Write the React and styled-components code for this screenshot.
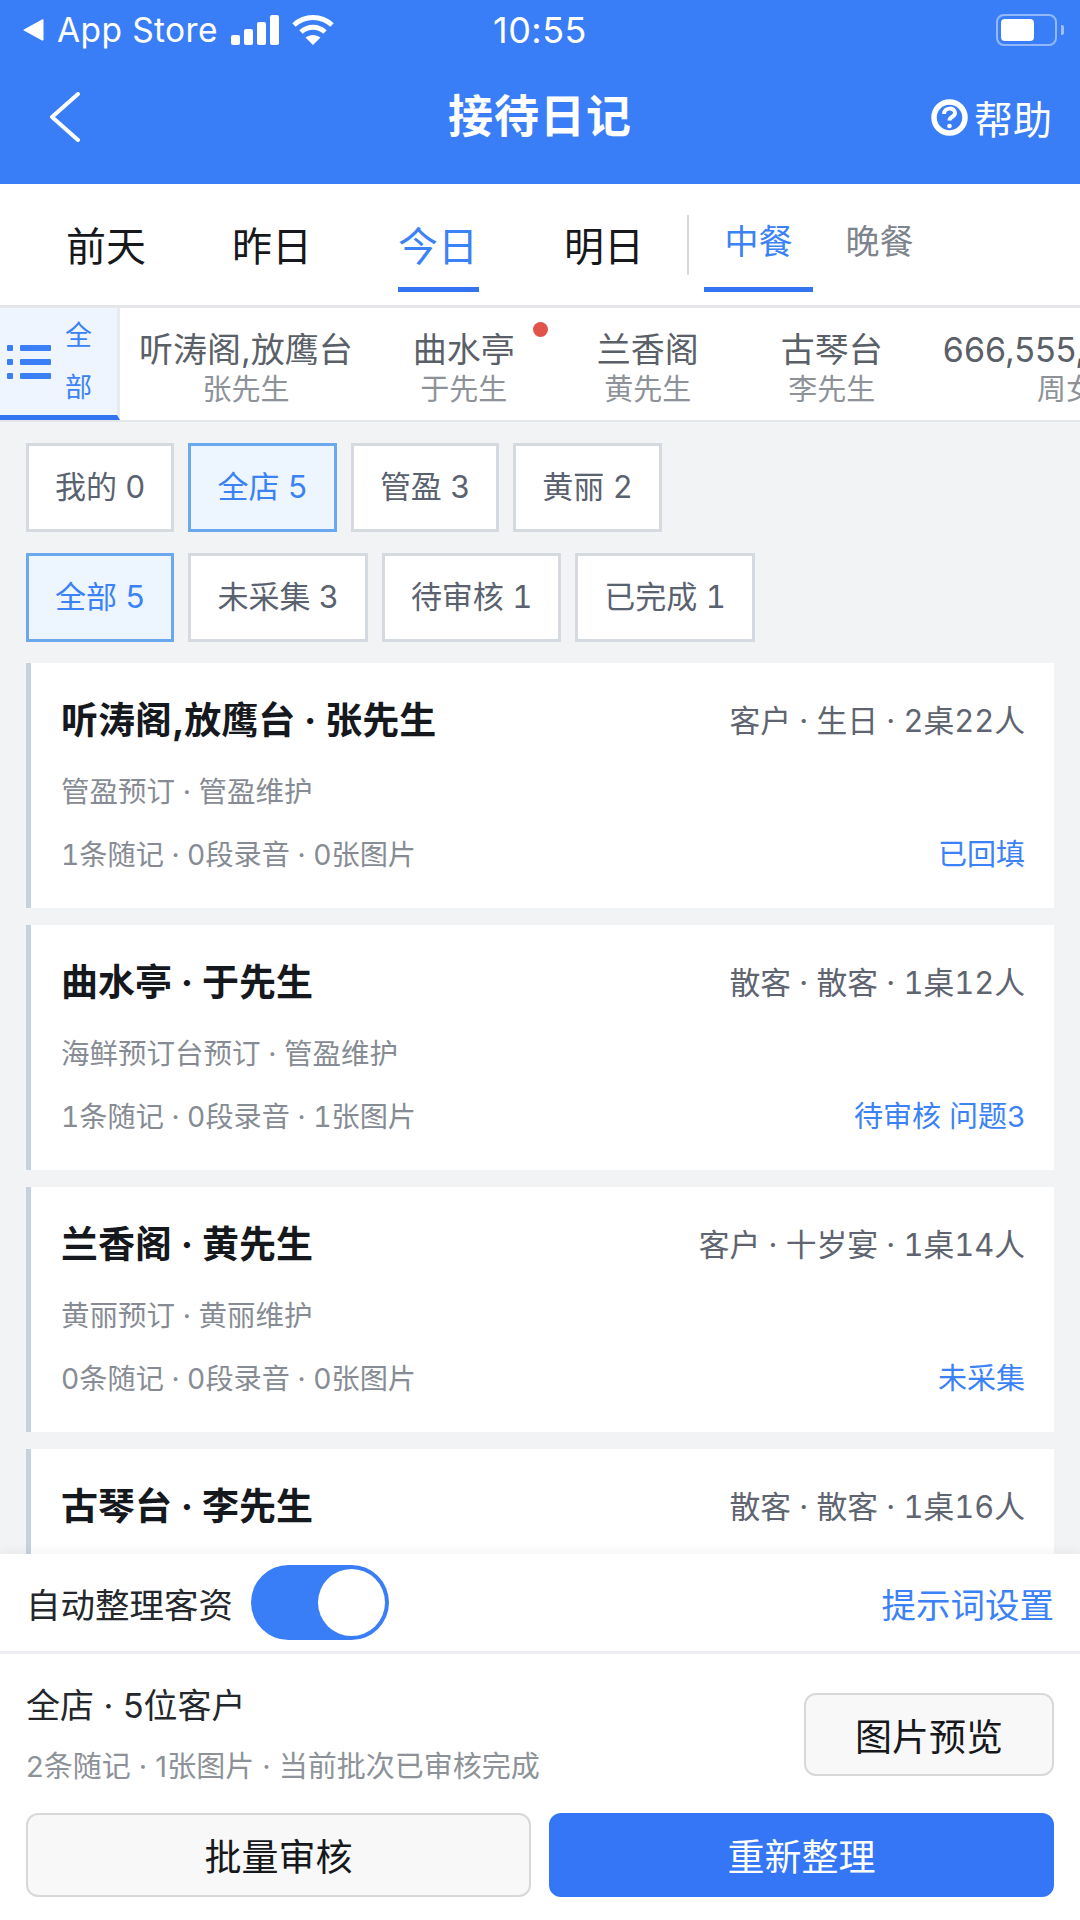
import React from "react";
import styled, { createGlobalStyle } from "styled-components";

const days = ["前天", "昨日", "今日", "明日"];
const rooms = [
  { name: "听涛阁,放鹰台", guest: "张先生" },
  { name: "曲水亭", guest: "于先生", dot: true },
  { name: "兰香阁", guest: "黄先生" },
  { name: "古琴台", guest: "李先生" },
  { name: "666,555,333,222", guest: "周女士" },
];
const staff = [["我的 0"], ["全店 5", true], ["管盈 3"], ["黄丽 2"]];
const states = [["全部 5", true], ["未采集 3"], ["待审核 1"], ["已完成 1"]];
const cards = [
  { title: "听涛阁,放鹰台 · 张先生", meta: "客户 · 生日 · 2桌22人", sub: "管盈预订 · 管盈维护", stats: "1条随记 · 0段录音 · 0张图片", status: "已回填" },
  { title: "曲水亭 · 于先生", meta: "散客 · 散客 · 1桌12人", sub: "海鲜预订台预订 · 管盈维护", stats: "1条随记 · 0段录音 · 1张图片", status: "待审核 问题3" },
  { title: "兰香阁 · 黄先生", meta: "客户 · 十岁宴 · 1桌14人", sub: "黄丽预订 · 黄丽维护", stats: "0条随记 · 0段录音 · 0张图片", status: "未采集" },
  { title: "古琴台 · 李先生", meta: "散客 · 散客 · 1桌16人" },
];

export default function App() {
  return (
    <Page>
      <GlobalStyle />
      <Header>
        <StatusBar>
          <StatusLeft>
            <svg width="22" height="24" viewBox="0 0 22 24">
              <path d="M1 12 20 1.500c.8-.4 1.500 0 1.500 1v19c0 1-.7 1.400-1.500 1z" fill="#fff" />
            </svg>
            <CarrierText>App Store</CarrierText>
            <svg width="48" height="30" viewBox="0 0 48 30" fill="#fff">
              <rect x="0" y="20" width="9" height="10" rx="2" />
              <rect x="13" y="14" width="9" height="16" rx="2" />
              <rect x="26" y="7" width="9" height="23" rx="2" />
              <rect x="39" y="0" width="9" height="30" rx="2" />
            </svg>
            <WifiIcon width="44" height="32" viewBox="0 0 44 32" fill="none" stroke="#fff" strokeWidth="5">
              <path d="M3 11C14 1 30 1 41 11" />
              <path d="M10 18C17 11.500 27 11.500 34 18" />
              <path d="M22 31 14.500 23.500C19 20 25 20 29.500 23.500z" fill="#fff" stroke="none" />
            </WifiIcon>
          </StatusLeft>
          <Clock>10:55</Clock>
          <StatusRight>
            <Battery>
              <BatteryFill />
            </Battery>
            <BatteryNub />
          </StatusRight>
        </StatusBar>
        <NavBar>
          <BackButton>
            <svg width="30" height="50" viewBox="0 0 30 50" fill="none" stroke="#fff" strokeWidth="4" strokeLinecap="round" strokeLinejoin="round">
              <path d="M28 2 2 25l26 23" />
            </svg>
          </BackButton>
          <Title>接待日记</Title>
          <HelpLink>
            <svg width="37" height="37" viewBox="0 0 37 37" fill="none" stroke="#fff">
              <circle cx="18.500" cy="18.500" r="15.500" strokeWidth="5.500" />
              <path d="M13 15c0-7 11-7 11-1 0 4-5.500 3.500-5.500 7.500" strokeWidth="4" />
              <circle cx="18.500" cy="27" r="2.300" fill="#fff" stroke="none" />
            </svg>
            帮助
          </HelpLink>
        </NavBar>
      </Header>

      <TabBar>
        {days.map((d) => (
          <DayTab key={d}>
            <DayLabel $active={d === "今日"}>{d}</DayLabel>
          </DayTab>
        ))}
        <TabDivider />
        <MealTab $active>中餐</MealTab>
        <MealTab>晚餐</MealTab>
      </TabBar>

      <RoomStrip>
        <AllCell>
          <svg width="44" height="36" viewBox="0 0 44 36" fill="#3b7ff5">
            <rect x="0" y="1" width="6" height="6" rx="1" />
            <rect x="13" y="1" width="31" height="6" rx="1" />
            <rect x="0" y="15" width="6" height="6" rx="1" />
            <rect x="13" y="15" width="31" height="6" rx="1" />
            <rect x="0" y="29" width="6" height="6" rx="1" />
            <rect x="13" y="29" width="31" height="6" rx="1" />
          </svg>
          <AllText>全<br />部</AllText>
        </AllCell>
        {rooms.map((r) => (
          <RoomItem key={r.name}>
            {r.dot && <RedDot />}
            <RoomName>{r.name}</RoomName>
            <RoomGuest>{r.guest}</RoomGuest>
          </RoomItem>
        ))}
      </RoomStrip>

      <Content>
        <ChipRow>
          {staff.map(([label, active]) => (
            <Chip key={label} $active={active}>{label}</Chip>
          ))}
        </ChipRow>
        <ChipRow>
          {states.map(([label, active]) => (
            <Chip key={label} $active={active}>{label}</Chip>
          ))}
        </ChipRow>
        <CardList>
          {cards.map((c) => (
            <Card key={c.title}>
              <CardTop>
                <CardTitle>{c.title}</CardTitle>
                <CardMeta>{c.meta}</CardMeta>
              </CardTop>
              {c.sub && <CardDesc>{c.sub}</CardDesc>}
              {c.stats && (
                <CardBottom>
                  <CardSub>{c.stats}</CardSub>
                  <CardStatus>{c.status}</CardStatus>
                </CardBottom>
              )}
            </Card>
          ))}
        </CardList>
      </Content>

      <Footer>
        <ToggleRow>
          <ToggleLabel>自动整理客资</ToggleLabel>
          <Toggle>
            <ToggleKnob />
          </Toggle>
          <SettingsLink>提示词设置</SettingsLink>
        </ToggleRow>
        <Summary>
          <div>
            <SummaryTitle>全店 · 5位客户</SummaryTitle>
            <SummarySub>2条随记 · 1张图片 · 当前批次已审核完成</SummarySub>
          </div>
          <PreviewButton>图片预览</PreviewButton>
        </Summary>
        <Actions>
          <ActionButton>批量审核</ActionButton>
          <ActionButton $primary>重新整理</ActionButton>
        </Actions>
      </Footer>
    </Page>
  );
}

const GlobalStyle = createGlobalStyle`
  html, body {
    margin: 0;
    padding: 0;
  }
  body {
    font-family: "Inter", "Noto Sans CJK SC", sans-serif;
  }
  * {
    box-sizing: border-box;
  }
`;

const Page = styled.div`
  width: 1080px;
  height: 1920px;
  background: #f2f3f5;
  display: flex;
  flex-direction: column;
  overflow: hidden;
`;

const Header = styled.header`
  height: 184px;
  background: #3a7ef7;
  color: #fff;
  flex: none;
`;

const StatusBar = styled.div`
  height: 60px;
  display: grid;
  grid-template-columns: 1fr auto 1fr;
  align-items: center;
`;

const StatusLeft = styled.div`
  display: flex;
  align-items: center;
  padding-left: 22px;
`;

const CarrierText = styled.span`
  font-size: 33.500px;
  margin: 0 13px;
  letter-spacing: 0.4px;
`;

const WifiIcon = styled.svg`
  margin-left: 12px;
`;

const Clock = styled.span`
  font-size: 36px;
  letter-spacing: 0.5px;
`;

const StatusRight = styled.div`
  display: flex;
  align-items: center;
  justify-content: flex-end;
  padding-right: 16px;
`;

const Battery = styled.div`
  width: 61px;
  height: 32px;
  border: 2px solid rgba(255, 255, 255, 0.45);
  border-radius: 8px;
  padding: 3px;
`;

const BatteryFill = styled.div`
  width: 33px;
  height: 22px;
  background: #fff;
  border-radius: 4px;
`;

const BatteryNub = styled.div`
  width: 3px;
  height: 10px;
  margin-left: 4px;
  background: rgba(255, 255, 255, 0.5);
  border-radius: 0 2px 2px 0;
`;

const NavBar = styled.div`
  height: 112px;
  margin-top: -3px;
  display: grid;
  grid-template-columns: 1fr auto 1fr;
  align-items: center;
  padding: 0 28px;
`;

const BackButton = styled.div`
  display: flex;
  align-items: center;
  padding: 8px 0 0 22px;
`;

const Title = styled.h1`
  margin: 0;
  font-size: 45px;
  font-weight: 700;
  letter-spacing: 1px;
`;

const HelpLink = styled.div`
  display: flex;
  align-items: center;
  justify-content: flex-end;
  gap: 6px;
  padding-top: 8px;
  font-size: 39px;
`;

const TabBar = styled.nav`
  height: 124px;
  flex: none;
  background: #fff;
  border-bottom: 3px solid #e4e6ea;
  display: flex;
  padding-left: 23px;
`;

const DayTab = styled.div`
  width: 166px;
  display: flex;
  justify-content: center;
`;

const DayLabel = styled.div`
  width: 81px;
  height: 108px;
  padding-top: 16px;
  display: flex;
  align-items: center;
  justify-content: center;
  white-space: nowrap;
  font-size: 40px;
  color: ${(p) => (p.$active ? "#3b82f6" : "#16181c")};
  border-bottom: 5px solid ${(p) => (p.$active ? "#3474f0" : "transparent")};
`;

const TabDivider = styled.div`
  width: 2px;
  height: 60px;
  margin: 31px 15px 0 0;
  background: #d5d9df;
`;

const MealTab = styled.div`
  width: 109px;
  height: 108px;
  margin-right: 12px;
  padding-top: 8px;
  display: flex;
  align-items: center;
  justify-content: center;
  font-size: 34px;
  color: ${(p) => (p.$active ? "#3b82f6" : "#7e848d")};
  border-bottom: 5px solid ${(p) => (p.$active ? "#3474f0" : "transparent")};
`;

const RoomStrip = styled.div`
  height: 114px;
  flex: none;
  background: #fff;
  border-bottom: 2px solid #e4e6ea;
  display: flex;
  overflow: hidden;
`;

const AllCell = styled.div`
  width: 120px;
  flex: none;
  background: #eef5fe;
  border-right: 3px solid #e8eaee;
  border-bottom: 5px solid #3474f0;
  display: flex;
  align-items: center;
  padding-left: 7px;
`;

const AllText = styled.div`
  margin-left: 14px;
  font-size: 27px;
  line-height: 52px;
  color: #3b82f6;
`;

const RoomItem = styled.div`
  position: relative;
  flex: none;
  min-width: 184px;
  padding: 10px 19px 0;
  display: flex;
  flex-direction: column;
  align-items: center;
  justify-content: center;
`;

const RedDot = styled.span`
  position: absolute;
  top: 14px;
  right: 8px;
  width: 15px;
  height: 15px;
  border-radius: 50%;
  background: #e0544c;
`;

const RoomName = styled.div`
  font-size: 34px;
  line-height: 42px;
  color: #5a6068;
  white-space: nowrap;
`;

const RoomGuest = styled.div`
  font-size: 29px;
  line-height: 38px;
  color: #8d9299;
  white-space: nowrap;
`;

const Content = styled.main`
  flex: 1;
  min-height: 0;
  overflow: hidden;
  padding: 21px 26px 0;
`;

const ChipRow = styled.div`
  display: flex;
  gap: 14px;
  margin-bottom: 21px;
`;

const Chip = styled.div`
  height: 89px;
  padding: 0 26px 6px;
  min-width: 146px;
  display: flex;
  align-items: center;
  justify-content: center;
  font-size: 31px;
  font-variant-numeric: tabular-nums;
  white-space: nowrap;
  color: ${(p) => (p.$active ? "#3b82f6" : "#5a6270")};
  background: ${(p) => (p.$active ? "#edf5ff" : "#fff")};
  border: 3px solid ${(p) => (p.$active ? "#6aa9f0" : "#d5dae1")};
`;

const CardList = styled.div`
  display: flex;
  flex-direction: column;
  gap: 17px;
`;

const Card = styled.article`
  height: 245px;
  flex: none;
  background: #fff;
  border-left: 5px solid #c8d2de;
  padding: 31px 29px 0 30px;
`;

const CardTop = styled.div`
  display: flex;
  justify-content: space-between;
  align-items: center;
  height: 48px;
`;

const CardTitle = styled.div`
  font-size: 37px;
  font-weight: 700;
  color: #15181d;
`;

const CardMeta = styled.div`
  font-size: 30.800px;
  font-variant-numeric: tabular-nums;
  color: #5f6570;
`;

const CardSub = styled.div`
  font-size: 28.200px;
  font-variant-numeric: tabular-nums;
  line-height: 38px;
  color: #878c94;
`;

const CardDesc = styled(CardSub)`
  margin-top: 31px;
  font-size: 28.500px;
`;

const CardBottom = styled.div`
  margin-top: 25px;
  display: flex;
  justify-content: space-between;
  align-items: flex-end;
`;

const CardStatus = styled.div`
  font-size: 29px;
  line-height: 38px;
  color: #3b82f6;
`;

const Footer = styled.footer`
  position: relative;
  flex: none;
  height: 366px;
  background: #fff;
  box-shadow: 0 -4px 10px rgba(0, 0, 0, 0.04);
`;

const ToggleRow = styled.div`
  height: 100px;
  padding: 0 26px;
  border-bottom: 3px solid #eceef1;
  display: flex;
  align-items: center;
`;

const ToggleLabel = styled.span`
  font-size: 34.500px;
  color: #24272c;
`;

const Toggle = styled.div`
  width: 138px;
  height: 75px;
  margin-left: 18px;
  border-radius: 38px;
  background: #3a7ef7;
  padding: 4px;
  display: flex;
  justify-content: flex-end;
`;

const ToggleKnob = styled.div`
  width: 67px;
  height: 67px;
  border-radius: 50%;
  background: #fff;
`;

const SettingsLink = styled.span`
  margin-left: auto;
  font-size: 34.500px;
  color: #3b82f6;
`;

const Summary = styled.div`
  height: 122px;
  display: flex;
  justify-content: space-between;
  align-items: flex-start;
  padding: 29px 26px 0;
`;

const SummaryTitle = styled.div`
  font-size: 34px;
  line-height: 46px;
  color: #24272c;
`;

const SummarySub = styled.div`
  margin-top: 19px;
  font-size: 29px;
  line-height: 38px;
  color: #8d9299;
`;

const PreviewButton = styled.div`
  width: 250px;
  height: 83px;
  margin-top: 10px;
  display: flex;
  align-items: center;
  justify-content: center;
  font-size: 37px;
  color: #16181c;
  background: #f8f8f8;
  border: 2px solid #d8d8d8;
  border-radius: 12px;
`;

const Actions = styled.div`
  display: grid;
  grid-template-columns: 1fr 1fr;
  gap: 18px;
  padding: 37px 26px 0;
`;

const ActionButton = styled.div`
  height: 84px;
  display: flex;
  align-items: center;
  justify-content: center;
  font-size: 37px;
  border-radius: 12px;
  color: ${(p) => (p.$primary ? "#fff" : "#16181c")};
  background: ${(p) => (p.$primary ? "#3476f5" : "#f8f8f8")};
  border: 2px solid ${(p) => (p.$primary ? "#3476f5" : "#d8d8d8")};
`;
